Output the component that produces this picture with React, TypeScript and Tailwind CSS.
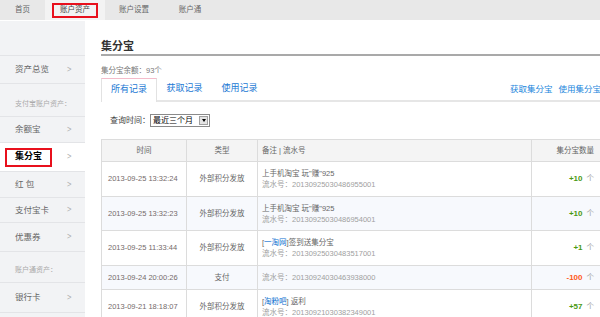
import React from 'react'

type Row = {
  time: string
  type: string
  remark?: React.ReactNode
  serial: string
  amount: string
  tone: 'plus' | 'minus'
  h: string
  alt?: boolean
}

const rows: Row[] = [
  {
    time: '2013-09-25 13:32:24',
    type: '外部积分发放',
    remark: '上手机淘宝 玩"赚"925',
    serial: '20130925030486955001',
    amount: '+10',
    tone: 'plus',
    h: 'h-[35px]'
  },
  {
    time: '2013-09-25 13:32:23',
    type: '外部积分发放',
    remark: '上手机淘宝 玩"赚"925',
    serial: '20130925030486954001',
    amount: '+10',
    tone: 'plus',
    h: 'h-[34px]',
    alt: true
  },
  {
    time: '2013-09-25 11:33:44',
    type: '外部积分发放',
    remark: (
      <>
        [<span className="text-[#0a6fd0]">一淘网</span>]签到送集分宝
      </>
    ),
    serial: '20130925030483517001',
    amount: '+1',
    tone: 'plus',
    h: 'h-[35px]'
  },
  {
    time: '2013-09-24 20:00:26',
    type: '支付',
    serial: '20130924030463938000',
    amount: '-100',
    tone: 'minus',
    h: 'h-[24px]',
    alt: true
  },
  {
    time: '2013-09-21 18:18:07',
    type: '外部积分发放',
    remark: (
      <>
        [<span className="text-[#0a6fd0]">淘粉吧</span>] 返利
      </>
    ),
    serial: '20130921030382349001',
    amount: '+57',
    tone: 'plus',
    h: 'h-[35px]'
  }
]

const SideItem = ({ label, active = false, h = 'h-[27px]' }: { label: string; active?: boolean; h?: string }) => (
  <div
    className={`flex items-center justify-between pl-[15px] pr-[12px] border-b border-[#e3e4e7] ${h} ${
      active ? 'bg-white' : ''
    }`}
  >
    {active ? (
      <span className="-ml-[10px] border-2 border-[#e8101c] px-[8px] h-[19px] flex items-center text-[9px] font-bold text-black">
        {label}
      </span>
    ) : (
      <span className="text-[8.5px] text-[#666]">{label}</span>
    )}
    <span className="text-[8px] text-[#b0b0b0] font-['DejaVu_Sans',sans-serif] scale-x-75">&gt;</span>
  </div>
)

const SideLabel = ({ label, h }: { label: string; h: string }) => (
  <div className={`flex items-end pb-[7px] pl-[15px] border-b border-[#e3e4e7] text-[7px] text-[#aaa] ${h}`}>
    {label}
  </div>
)

export default function App() {
  return (
    <div className="w-[600px] h-[317px] overflow-hidden bg-white font-['Liberation_Sans','Noto_Sans_CJK_SC',sans-serif] text-[#333]">
      <nav className="flex h-[20px] bg-[#e8e8e8] text-[7.5px] text-[#666]">
        <div className="w-[45px] flex items-center justify-center">首页</div>
        <div className="w-[60px] bg-[#f3f3f3] flex items-center justify-center">
          <span className="border-2 border-[#e8101c] h-[15px] px-[6px] flex items-center text-[#444]">账户资产</span>
        </div>
        <div className="w-[58px] flex items-center justify-center">账户设置</div>
        <div className="w-[54px] flex items-center justify-center">账户通</div>
      </nav>

      <div className="flex mt-px">
        <aside className="w-[85px] shrink-0 bg-[#f2f3f5] h-[296px]">
          <div className="h-[35px] border-b border-[#e3e4e7]" />
          <SideItem label="资产总览" h="h-[28px]" />
          <SideLabel label="支付宝账户资产：" h="h-[33px]" />
          <SideItem label="余额宝" h="h-[26px]" />
          <SideItem label="集分宝" active h="h-[29px]" />
          <SideItem label="红 包" h="h-[26px]" />
          <SideItem label="支付宝卡" h="h-[25px]" />
          <SideItem label="优惠券" h="h-[29px]" />
          <SideLabel label="账户通资产：" h="h-[31px]" />
          <SideItem label="银行卡" h="h-[30px]" />
        </aside>

        <main className="flex-1 pl-[16px]">
          <h1 className="pt-[18px] text-[11px] leading-[14px] font-bold text-[#333]">集分宝</h1>
          <div className="mt-px h-[2px] bg-[#a9a9a9]" />
          <p className="mt-[10px] text-[7.5px] leading-[10px] text-[#777]">集分宝余额：93个</p>

          <div className="mt-[2px] flex items-end justify-between border-b-2 border-[#e6e6e6]">
            <div className="flex text-[9px] text-[#1a78d4]">
              <div className="-mb-[2px] w-[56px] h-[24px] pb-[2px] bg-white border border-[#e2e2e2] border-t-[#f4bccb] border-b-0 flex items-center justify-center">
                所有记录
              </div>
              <div className="w-[55px] h-[22px] flex items-center justify-center">获取记录</div>
              <div className="w-[55px] h-[22px] flex items-center justify-center">使用记录</div>
            </div>
            <div className="flex gap-[6px] h-[22px] items-center text-[8.5px] text-[#1a86dc]">
              <span>获取集分宝</span>
              <span>使用集分宝</span>
            </div>
          </div>

          <div className="mt-[12px] flex items-center pl-[9px] h-[13px]">
            <span className="text-[8px] text-[#444] w-[40px]">查询时间：</span>
            <div className="w-[60px] h-[13px] border border-[#8a8a8a] flex items-center bg-white">
              <span className="flex-1 pl-[2px] text-[8px] leading-none text-black">最近三个月</span>
              <span className="w-[9px] h-[9px] mr-px bg-[#e4e4e4] border border-[#a0a0a0] flex items-center justify-center">
                <span className="w-0 h-0 border-l-[2.5px] border-r-[2.5px] border-t-[3px] border-l-transparent border-r-transparent border-t-black" />
              </span>
            </div>
          </div>

          <table className="mt-[12px] w-[499px] table-fixed border-collapse text-[7.5px]">
            <colgroup>
              <col className="w-[85px]" />
              <col className="w-[71px]" />
              <col className="w-[274px]" />
              <col className="w-[69px]" />
            </colgroup>
            <thead>
              <tr className="h-[22px] bg-[#f4f4f4] text-[#666]">
                <th className="border border-[#dcdcdc] font-normal text-center">时间</th>
                <th className="border border-[#dcdcdc] font-normal text-center">类型</th>
                <th className="border border-[#dcdcdc] font-normal text-left pl-[4px]">备注 | 流水号</th>
                <th className="border border-[#dcdcdc] font-normal text-right pr-[6px]">集分宝数量</th>
              </tr>
            </thead>
            <tbody>
              {rows.map((r) => (
                <tr key={r.serial} className={`${r.h} ${r.alt ? 'bg-[#f7f9fd]' : 'bg-white'}`}>
                  <td className="border border-[#dcdcdc] pl-[6px] text-[#746a6a] whitespace-nowrap">{r.time}</td>
                  <td className="border border-[#dcdcdc] text-center text-[#666]">{r.type}</td>
                  <td className="border border-[#dcdcdc] pl-[4px] leading-[11px]">
                    {r.remark && <div className="text-[#666]">{r.remark}</div>}
                    <div className="text-[#a0a0a0]">流水号：{r.serial}</div>
                  </td>
                  <td className="border border-[#dcdcdc] text-right pr-[6px] whitespace-nowrap">
                    <span
                      className={`font-bold text-[8px] ${r.tone === 'plus' ? 'text-[#4a9a12]' : 'text-[#ff5a1a]'}`}
                    >
                      {r.amount}
                    </span>
                    <span className="ml-[4px] text-[#999]">个</span>
                  </td>
                </tr>
              ))}
            </tbody>
          </table>
        </main>
      </div>
    </div>
  )
}
